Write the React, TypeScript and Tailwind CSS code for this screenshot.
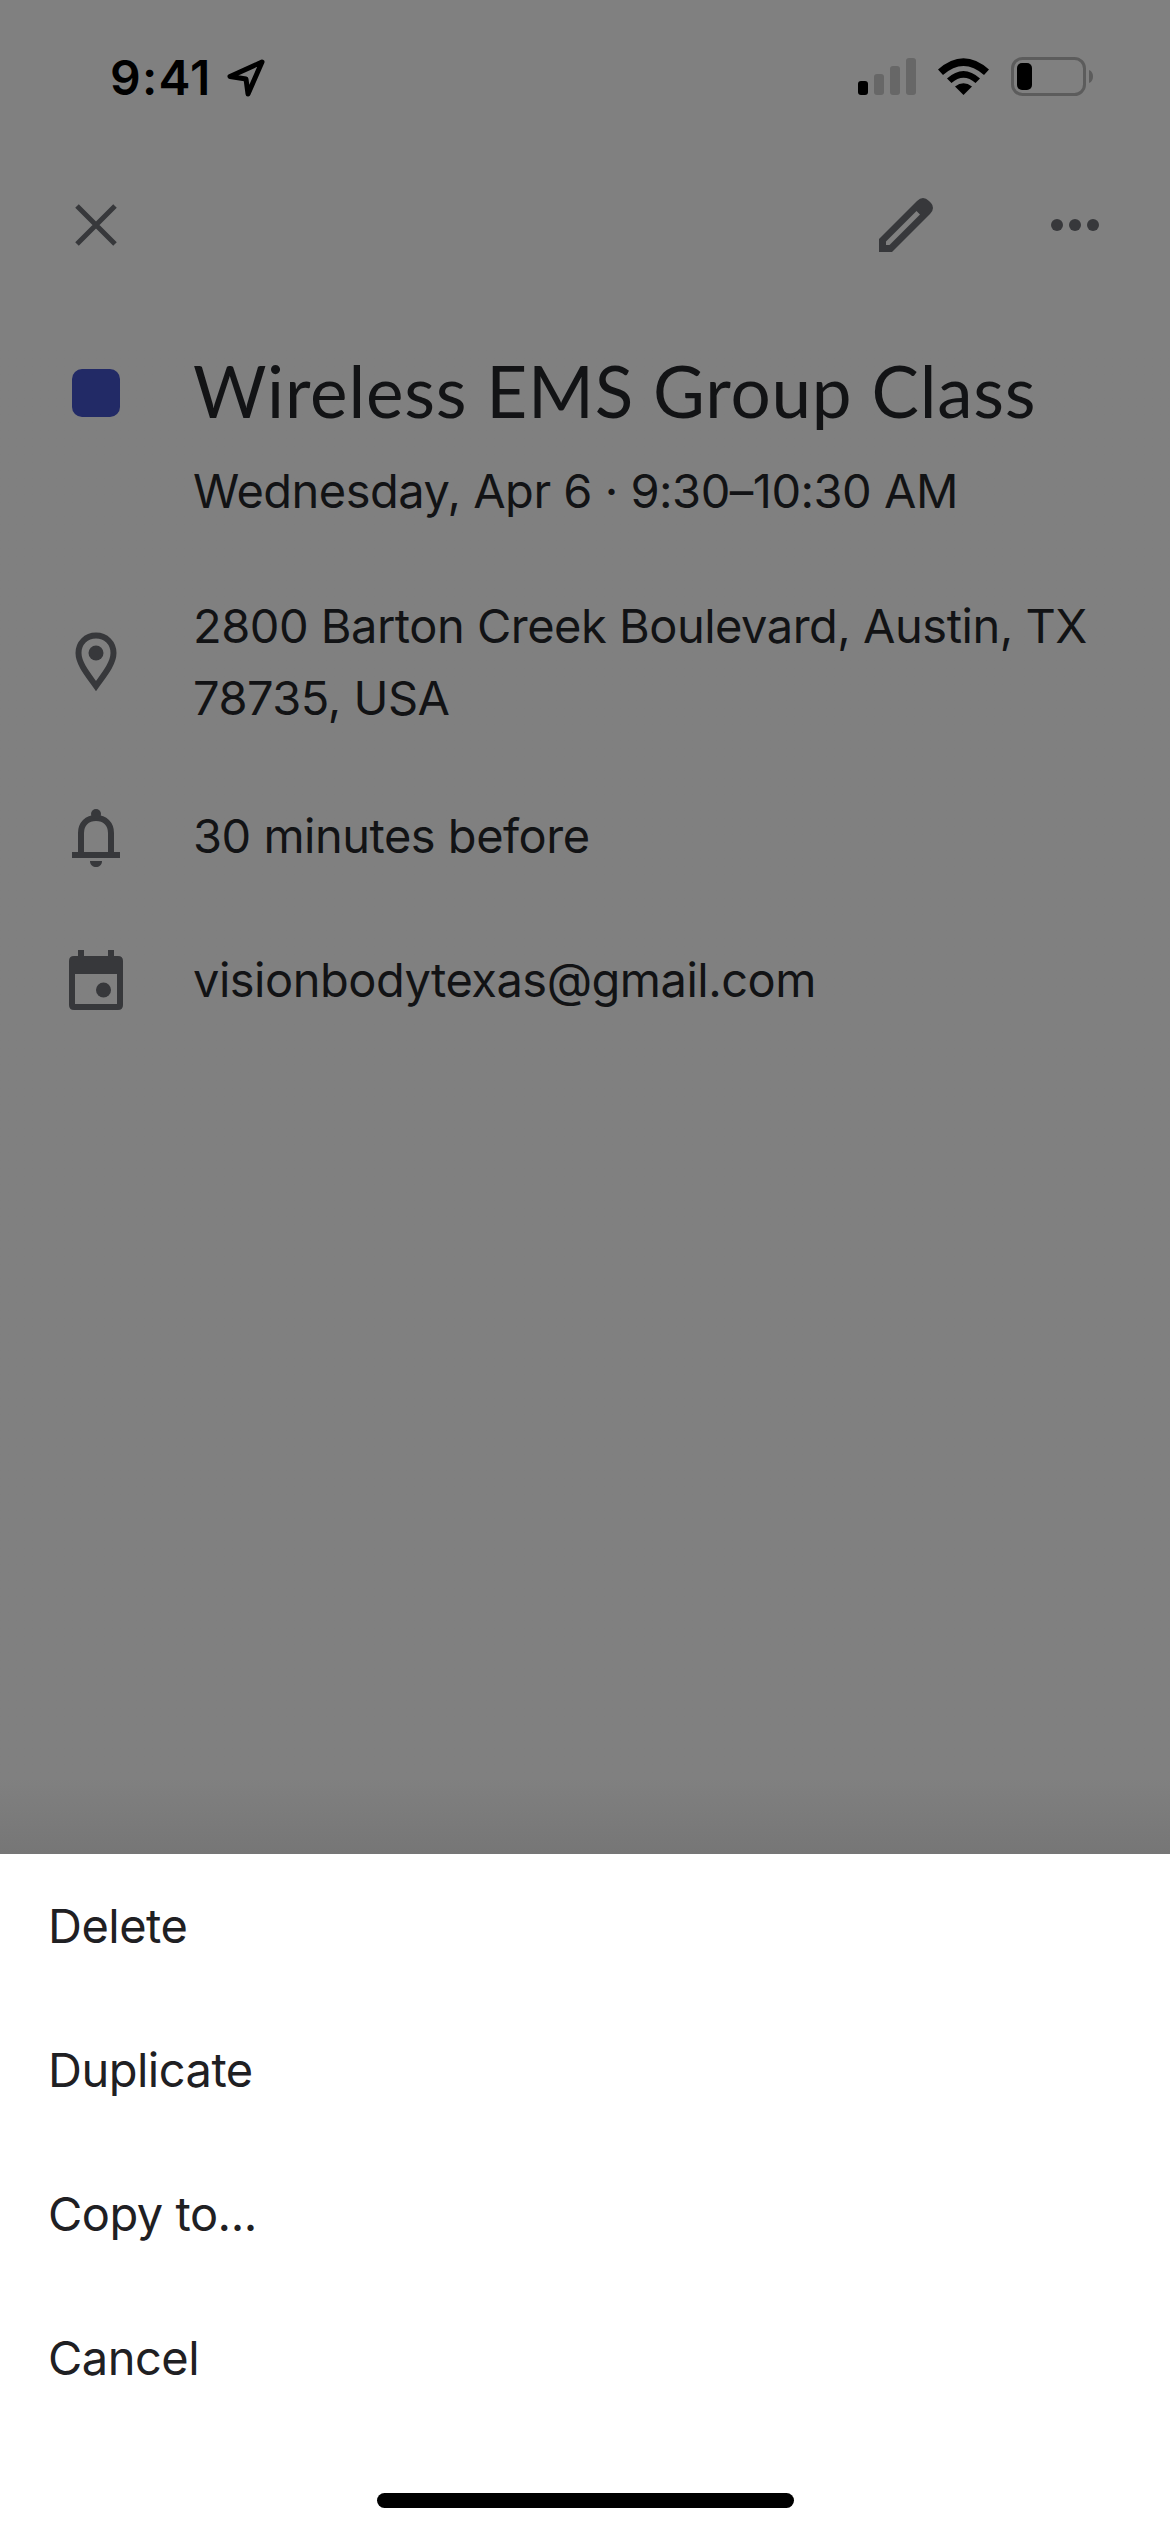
import React from 'react';

const bodyFont = "font-['Inter','Liberation_Sans',sans-serif] text-[47px] tracking-[-0.5px]";

const CloseIcon = () => (
    <svg width="42" height="42" viewBox="0 0 42 42" fill="none">
        <path d="M2 2L40 40M40 2L2 40" stroke="#37383b" strokeWidth="5" />
    </svg>
);

const PencilIcon = () => (
    <svg width="54" height="54" viewBox="0 0 54 54">
        <path
            fillRule="evenodd"
            d="M0 41L38 3Q41 0 44 0Q47 0 50 3L52 5Q54 7 54 10Q54 13 51 16L13 54H0ZM7 43.500V47H10.500L41 16.500L37.500 13Z"
            fill="#37383b"
        />
    </svg>
);

const PinIcon = () => (
    <svg width="42" height="60" viewBox="0 0 42 60">
        <path
            d="M21 54C14 44 3.500 32 3.500 21C3.500 11 11 3.500 21 3.500C31 3.500 38.500 11 38.500 21C38.500 32 28 44 21 54Z"
            fill="none"
            stroke="#37383b"
            strokeWidth="6"
        />
        <circle cx="21" cy="21" r="7.500" fill="#37383b" />
    </svg>
);

const BellIcon = () => (
    <svg className="mt-[4px]" width="48" height="58" viewBox="0 0 48 58">
        <path d="M9 43V24C9 15 15 9 24 9C33 9 39 15 39 24V43" fill="none" stroke="#37383b" strokeWidth="6" />
        <circle cx="24" cy="5" r="5" fill="#37383b" />
        <rect x="0" y="43" width="48" height="6" fill="#37383b" />
        <path d="M18 52H30C30 56 27 58 24 58C21 58 18 56 18 52Z" fill="#37383b" />
    </svg>
);

const CalendarIcon = () => (
    <svg width="54" height="60" viewBox="0 0 54 60">
        <path
            fillRule="evenodd"
            d="M9 0H15V6H39V0H45V6H49Q54 6 54 11V55Q54 60 49 60H5Q0 60 0 55V11Q0 6 5 6H9ZM6 24V54H48V24Z"
            fill="#37383b"
        />
        <circle cx="34.500" cy="40" r="7.500" fill="#37383b" />
    </svg>
);

const SignalIcon = () => (
    <svg width="58" height="37" viewBox="0 0 58 37">
        <rect x="0" y="23" width="10" height="14" rx="3" fill="#000" />
        <rect x="16" y="16" width="10" height="21" rx="3" fill="#676767" />
        <rect x="32" y="8" width="10" height="29" rx="3" fill="#676767" />
        <rect x="48" y="0" width="10" height="37" rx="3" fill="#676767" />
    </svg>
);

const WifiIcon = () => (
    <svg width="51" height="37" viewBox="0 0 51 37">
        <path d="M25.500 37L17 28.500Q25.500 22 34 28.500Z" fill="#000" />
        <path d="M9 20.500L13.500 25Q25.500 14.500 37.500 25L42 20.500Q25.500 5.500 9 20.500Z" fill="#000" />
        <path d="M0 11.500L5 17Q25.500 -1 46 17L51 11.500Q25.500 -11 0 11.500Z" fill="#000" />
    </svg>
);

const BatteryIcon = () => (
    <svg width="82" height="39" viewBox="0 0 82 39">
        <rect x="1.500" y="1.500" width="72" height="36" rx="10" fill="none" stroke="#5c5c5c" strokeWidth="3" />
        <rect x="6" y="6" width="15" height="27" rx="5" fill="#000" />
        <path d="M78 13C81 14 82 17 82 19.500C82 22 81 25 78 26Z" fill="#5c5c5c" />
    </svg>
);

const LocationIcon = () => (
    <svg width="38" height="38" viewBox="0 0 38 38">
        <path d="M35 3L3 17.500L19 20L21 35Z" fill="none" stroke="#000" strokeWidth="5" strokeLinejoin="round" />
    </svg>
);

const StatusBar: React.FC = () => (
    <div className="flex h-[116px] shrink-0 items-end justify-between pl-[110px] pr-[77px] pb-[18px]">
        <div className="flex items-center gap-[15px]">
            <span className="font-['Inter','Liberation_Sans',sans-serif] text-[48px] leading-[40px] tracking-[1.2px] font-semibold text-black">9:41</span>
            <LocationIcon />
        </div>
        <div className="flex items-center gap-[22px] pb-[2px]">
            <SignalIcon />
            <WifiIcon />
            <BatteryIcon />
        </div>
    </div>
);

const Toolbar: React.FC = () => (
    <div className="flex h-[231px] shrink-0 items-start justify-between pl-[75px] pr-[71px] pt-[88px]">
        <CloseIcon />
        <div className="-mt-[6px] flex items-center gap-[118px]">
            <PencilIcon />
            <div className="flex gap-[6px]">
                <span className="h-[12px] w-[12px] rounded-full bg-[#37383b]" />
                <span className="h-[12px] w-[12px] rounded-full bg-[#37383b]" />
                <span className="h-[12px] w-[12px] rounded-full bg-[#37383b]" />
            </div>
        </div>
    </div>
);

const DetailRow: React.FC<{ icon: React.ReactNode; className?: string; children: React.ReactNode }> = ({ icon, className, children }) => (
    <div className={`flex items-center ${className ?? ''}`}>
        <div className="flex w-[193px] shrink-0 justify-center pr-[1px]">{icon}</div>
        <div className={`${bodyFont} leading-[72px] text-[#121315] whitespace-nowrap`}>{children}</div>
    </div>
);

const SheetItem: React.FC<{ label: string }> = ({ label }) => (
    <div className={`${bodyFont} flex h-[144px] items-center pl-[48px] text-[#1f2023]`}>{label}</div>
);

export default function App() {
    return (
        <div className="flex h-[2532px] w-[1170px] flex-col overflow-hidden bg-[#808080]">
            <StatusBar />
            <Toolbar />
            <div className="flex-1 bg-gradient-to-b from-[#808080] via-[#808080] via-[95%] to-[#767676]">
                <div className="flex items-start">
                    <div className="flex w-[193px] shrink-0 justify-center pt-[22px] pr-[1px]">
                        <div className="h-[48px] w-[48px] rounded-[10px] bg-[#222a66]" />
                    </div>
                    <h1 className="mt-[2px] font-['Lato',sans-serif] text-[71px] leading-[84px] tracking-[0.8px] font-normal text-[#121315] whitespace-nowrap">
                        Wireless EMS Group Class
                    </h1>
                </div>
                <div className={`${bodyFont} mt-[22px] pl-[193px] leading-[72px] text-[#121315] whitespace-nowrap`}>
                    Wednesday, Apr 6 · 9:30–10:30 AM
                </div>
                <DetailRow className="mt-[63px]" icon={<PinIcon />}>
                    2800 Barton Creek Boulevard, Austin, TX
                    <br />
                    78735, USA
                </DetailRow>
                <DetailRow className="mt-[66px]" icon={<BellIcon />}>30 minutes before</DetailRow>
                <DetailRow className="mt-[72px]" icon={<CalendarIcon />}>visionbodytexas@gmail.com</DetailRow>
            </div>
            <div className="h-[678px] shrink-0 bg-white">
                <SheetItem label="Delete" />
                <SheetItem label="Duplicate" />
                <SheetItem label="Copy to..." />
                <SheetItem label="Cancel" />
                <div className="mt-[63px] flex justify-center">
                    <div className="h-[15px] w-[417px] rounded-full bg-black" />
                </div>
            </div>
        </div>
    );
}
